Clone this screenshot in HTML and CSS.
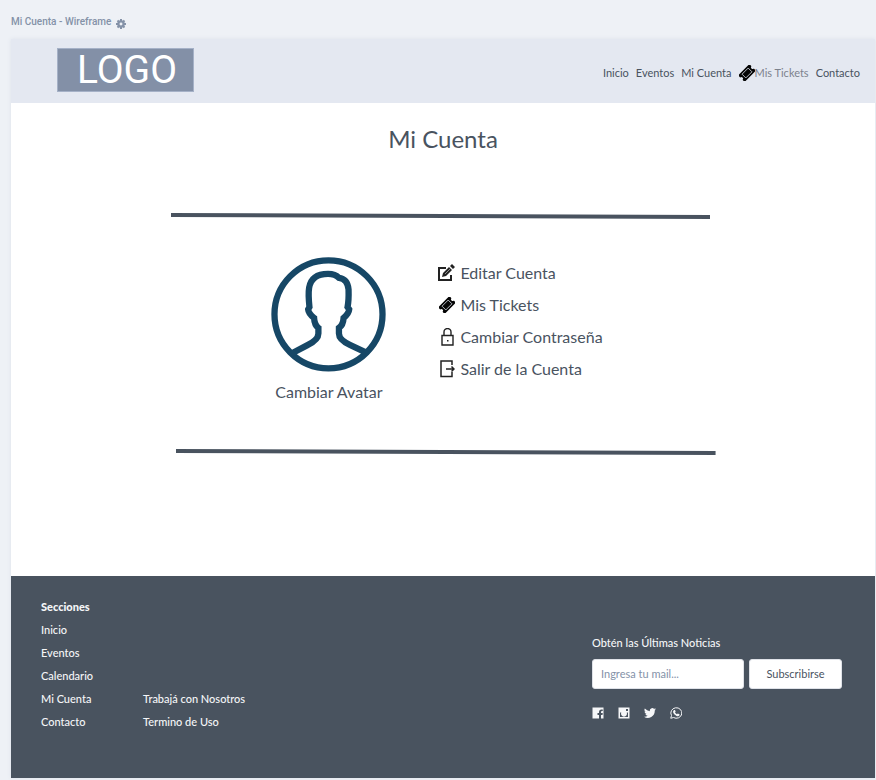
FILE: index.html
```html
<!DOCTYPE html>
<html lang="es">
<head>
<meta charset="utf-8">
<meta name="viewport" content="width=device-width, initial-scale=1">
<title>Mi Cuenta - Wireframe</title>
<link rel="stylesheet" href="styles.css">
</head>
<body>
<svg class="sprite" aria-hidden="true">
  <symbol id="ticket" viewBox="0 0 24 24">
    <g transform="rotate(-45 12 12)">
      <path fill="#050505" d="M0 5h24v4.500a2.500 2.500 0 0 0 0 5V19H0v-4.500a2.500 2.500 0 0 0 0-5z"/>
      <path fill="none" stroke="#c3c8d1" stroke-width="1.300" d="M5.500 8h13v8h-13z"/>
    </g>
  </symbol>
</svg>

<div class="frame-label">
  <span>Mi Cuenta - Wireframe</span>
  <svg class="gear" viewBox="0 0 20 20" aria-hidden="true">
    <circle cx="10" cy="10" r="5.2" fill="none" stroke="currentColor" stroke-width="4.500"/>
    <path stroke="currentColor" stroke-width="4" d="M10 0v4M10 16v4M0 10h4M16 10h4M3 3l3 3M14 14l3 3M17 3l-3 3M6 14l-3 3"/>
  </svg>
</div>

<div class="page">
  <header class="header">
    <a class="logo" href="#">LOGO</a>
    <nav class="nav" aria-label="Principal">
      <a href="#">Inicio</a>
      <a href="#">Eventos</a>
      <a href="#">Mi Cuenta</a>
      <a class="nav-tickets" href="#"><svg class="nav-icon" aria-hidden="true"><use href="#ticket"/></svg>Mis Tickets</a>
      <a href="#">Contacto</a>
    </nav>
  </header>

  <main class="main">
    <h1 class="title">Mi Cuenta</h1>
    <section class="account">
      <svg class="rule" viewBox="0 0 539 6" preserveAspectRatio="none" aria-hidden="true"><path d="M0 2L539 4"/></svg>
      <div class="profile">
        <a class="avatar" href="#">
          <svg class="avatar-picture" viewBox="32 20 347 347" aria-hidden="true">
            <circle cx="205.500" cy="193" r="163"/>
            <path d="M94 311L142 286Q175 270 175 251V234Q163 225 162 204Q145 191 144 178L148 171Q144 132 147 113Q154 71 204 71Q226 71 237 83Q263 86 266 118Q267 151 263 171L268 178Q267 191 251 204Q250 225 237 234V251Q237 270 270 285L318 308"/>
          </svg>
          <span>Cambiar Avatar</span>
        </a>
        <ul class="actions">
          <li><a href="#">
            <svg class="action-icon" viewBox="0 0 18 18" aria-hidden="true"><path fill="none" stroke="#222" stroke-width="2" d="M9 4H2v12h12v-5"/><path fill="#222" d="M5 13l1-4 6-6 3 3-6 6zM13 2l2-2 3 3-2 2z"/><path stroke="#fff" stroke-width=".5" d="M8 10l5-5"/></svg>
            Editar Cuenta</a></li>
          <li><a href="#">
            <svg class="action-icon ticket-icon" aria-hidden="true"><use href="#ticket"/></svg>
            Mis Tickets</a></li>
          <li><a href="#">
            <svg class="action-icon" viewBox="0 0 18 18" aria-hidden="true"><path fill="none" stroke="#222" stroke-width="1.400" d="M5 7.500h11v9.500H5zM7 7.500V4a3.500 3.500 0 0 1 7 0v3.500"/><path fill="#222" d="M10 12h1.500v1.500H10z"/></svg>
            Cambiar Contraseña</a></li>
          <li><a href="#">
            <svg class="action-icon" viewBox="0 0 18 18" aria-hidden="true"><path fill="none" stroke="#222" stroke-width="1.500" d="M15 5V1H4v15.500h11V12M9 9h8M14.500 6.500L17 9l-2.500 2.500"/></svg>
            Salir de la Cuenta</a></li>
        </ul>
      </div>
      <svg class="rule rule-end" viewBox="0 0 539 6" preserveAspectRatio="none" aria-hidden="true"><path d="M0 2L539 4"/></svg>
    </section>
  </main>

  <footer class="footer">
    <nav class="footer-nav" aria-label="Secciones">
      <div class="footer-column">
        <h2>Secciones</h2>
        <a href="#">Inicio</a>
        <a href="#">Eventos</a>
        <a href="#">Calendario</a>
        <a href="#">Mi Cuenta</a>
        <a href="#">Contacto</a>
      </div>
      <div class="footer-column">
        <a href="#">Trabajá con Nosotros</a>
        <a href="#">Termino de Uso</a>
      </div>
    </nav>
    <form class="newsletter">
      <label for="mail">Obtén las Últimas Noticias</label>
      <div class="fields">
        <input id="mail" type="email" placeholder="Ingresa tu mail...">
        <button type="button">Subscribirse</button>
      </div>
      <div class="social">
        <a href="#" aria-label="Facebook"><svg viewBox="0 0 24 24"><path fill="currentColor" d="M1 1h22v22h-5v-7h3l.5-4H18v-2q0-2 2-2h1.500V5H19q-5 0-5 5v2h-3v4h3v7H1z"/></svg></a>
        <a href="#" aria-label="Instagram"><svg viewBox="0 0 24 24"><path fill="currentColor" fill-rule="evenodd" d="M1 1h22v22H1zM4 11v9h16v-9h-2.500a6 6 0 1 1-11 0zM16 4v4h4V4z"/><circle cx="12" cy="12.500" r="4" fill="currentColor"/></svg></a>
        <a href="#" aria-label="Twitter"><svg viewBox="0 0 24 24"><path fill="currentColor" d="M24 4.600a10 10 0 0 1-2.800.8 5 5 0 0 0 2.100-2.700 10 10 0 0 1-3.100 1.200 4.900 4.900 0 0 0-8.400 4.500A14 14 0 0 1 1.700 3.200a4.900 4.900 0 0 0 1.500 6.500 5 5 0 0 1-2.200-.6 4.900 4.900 0 0 0 4 4.900 5 5 0 0 1-2.300.1 4.900 4.900 0 0 0 4.600 3.400A10 10 0 0 1 0 19.500 14 14 0 0 0 21.500 7z"/></svg></a>
        <a href="#" aria-label="WhatsApp"><svg viewBox="0 0 24 24"><path fill="none" stroke="currentColor" stroke-width="2" d="M1.500 22.500L3 17A11 10.500 0 1 1 7 21z"/><path fill="currentColor" d="M8 6l2 0 1.300 3.500-1.300 1.500q1.500 2.500 4 3.500l1.500-1.500 3.500 1.500v2q-2 3-6 1.500-6-2.500-7-8 0-2.500 2-4z"/></svg></a>
      </div>
    </form>
  </footer>
</div>
</body>
</html>
```

FILE: styles.css
```css
* {
  box-sizing: border-box;
}

body {
  margin: 0;
  background: #eef1f6;
  color: #49535f;
  font-family: Lato, "Liberation Sans", sans-serif;
  font-size: 11px;
  line-height: 16px;
}

a {
  color: inherit;
  text-decoration: none;
}

svg {
  display: block;
}

.sprite {
  position: absolute;
  width: 0;
  height: 0;
}

.frame-label {
  display: flex;
  align-items: center;
  gap: 5px;
  padding: 14px 11px 9px;
  color: #8492a8;
  font: 500 10px/16px Roboto, sans-serif;
}

.gear {
  width: 10px;
  height: 10px;
  margin-top: 3px;
}

.page {
  margin: 0 1px 2px 11px;
  background: #fff;
  box-shadow: 0 0 4px #dce1ea;
}

.header {
  display: flex;
  align-items: center;
  justify-content: space-between;
  min-height: 64px;
  padding: 0 15px 2px 46px;
  background: #e4e8f1;
}

.logo {
  padding: 0 16px 0 19px;
  border: 1px solid #a5b1c7;
  background: #8390a7;
  color: #fff;
  font: 39px/42px Roboto, sans-serif;
}

.nav {
  display: flex;
  align-items: center;
  gap: 7px;
  padding-top: 6px;
}

.nav-tickets {
  display: flex;
  align-items: center;
  color: #7c828d;
}

.nav-icon {
  width: 16px;
  height: 16px;
}

.main {
  padding: 20px 0 121px;
}

.title {
  margin: 0 0 58px;
  font-size: 24px;
  font-weight: 400;
  line-height: 32px;
  text-align: center;
}

.account {
  max-width: 545px;
  margin: 0 auto;
}

.rule {
  width: 99%;
  height: 6px;
  fill: none;
  stroke: #49535f;
  stroke-width: 4px;
}

.rule-end {
  margin-left: auto;
}

.profile {
  display: flex;
  justify-content: center;
  gap: 51px;
  padding: 38px 12px 47px 0;
  font-size: 16px;
  line-height: 20px;
}

.avatar {
  display: flex;
  flex-direction: column;
  align-items: center;
  gap: 10px;
}

.avatar-picture {
  width: 115px;
  height: 115px;
  fill: none;
  stroke: #164766;
  stroke-width: 19px;
}

.actions {
  display: flex;
  flex-direction: column;
  gap: 12px;
  margin: 0;
  padding: 6px 0 0;
  list-style: none;
}

.actions a {
  display: flex;
  align-items: center;
  gap: 5px;
}

.action-icon {
  width: 18px;
  height: 18px;
}

.ticket-icon {
  padding: 1px 0 1px 2px;
}

.footer {
  display: flex;
  justify-content: space-between;
  padding: 19px 33px 45px 30px;
  background: #49535f;
  color: #f5f6f8;
  font-weight: 500;
}

.footer-nav {
  display: flex;
  align-items: flex-end;
  gap: 50px;
}

.footer-column {
  display: flex;
  flex-direction: column;
  line-height: 23px;
}

.footer-column h2 {
  margin: 0;
  font-size: 11px;
  font-weight: 900;
  line-height: 23px;
}

.newsletter {
  padding-top: 40px;
}

.fields {
  display: flex;
  gap: 5px;
  margin: 8px 0 18px;
}

.fields input,
.fields button {
  height: 30px;
  border: 1px solid #dfe2e8;
  border-radius: 3px;
  background: #fff;
  color: #49535f;
  font: 11px/16px Lato, sans-serif;
}

.fields input {
  width: 152px;
  padding: 0 8px 2px;
}

.fields input::placeholder {
  color: #8492a8;
  opacity: 1;
}

.fields button {
  width: 93px;
  padding: 0;
}

.social {
  display: flex;
  gap: 14px;
}

.social svg {
  width: 12px;
  height: 12px;
}
```
